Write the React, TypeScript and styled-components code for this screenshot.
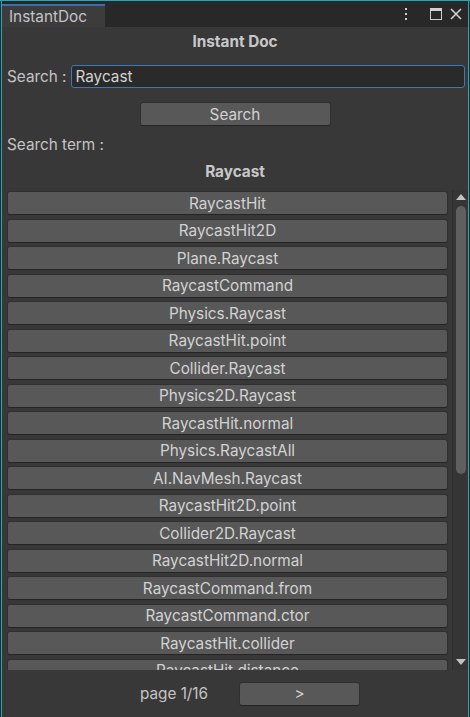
import React, { useState } from "react";
import styled, { createGlobalStyle } from "styled-components";

// ===================== GLOBAL =====================
const Global = createGlobalStyle`
  html, body {
    margin: 0;
    padding: 0;
    background: #282828;
  }
  * { box-sizing: border-box; }
`;

const RESULTS = [
  "RaycastHit",
  "RaycastHit2D",
  "Plane.Raycast",
  "RaycastCommand",
  "Physics.Raycast",
  "RaycastHit.point",
  "Collider.Raycast",
  "Physics2D.Raycast",
  "RaycastHit.normal",
  "Physics.RaycastAll",
  "AI.NavMesh.Raycast",
  "RaycastHit2D.point",
  "Collider2D.Raycast",
  "RaycastHit2D.normal",
  "RaycastCommand.from",
  "RaycastCommand.ctor",
  "RaycastHit.collider",
  "RaycastHit.distance",
];

const FONT_SIZE = 15.3;

// ===================== STYLED COMPONENTS =====================
const Window = styled.div`
  width: 470px;
  height: 717px;
  display: flex;
  flex-direction: column;
  background: #282828;
  border-top: 1px solid #1fa9b9;
  padding: 0 1px;
  font-family: Inter, "Noto Sans", sans-serif;
  color: #c4c4c4;
  font-size: ${FONT_SIZE}px;
`;

const Frame = styled.div`
  flex: 1;
  display: flex;
  flex-direction: column;
  border-left: 1px solid #1fa9b9;
  border-right: 1px solid #1fa9b9;
  min-height: 0;
`;

const TabBar = styled.div`
  height: 26px;
  display: flex;
  align-items: flex-end;
  justify-content: space-between;
  background: #282828;
`;

const Tab = styled.div`
  width: 103px;
  height: 23px;
  background: #3c3c3c;
  border-top: 2px solid #3a6fa8;
  padding: 0 0 0 7px;
  display: flex;
  align-items: center;
  color: #c4c4c4;
`;

const TabIcons = styled.div`
  display: flex;
  align-items: center;
  gap: 8px;
  height: 26px;
  padding-right: 6px;
  color: #d0d0d0;
`;

const Spacer = styled.span`
  width: 6px;
`;

const Body = styled.div`
  flex: 1;
  display: flex;
  flex-direction: column;
  background: #383838;
  min-height: 0;
`;

const Heading = styled.div<{ h?: number }>`
  text-align: center;
  font-weight: 700;
  color: #c8c8c8;
  height: ${(p) => p.h ?? 20}px;
  line-height: ${(p) => p.h ?? 20}px;
`;

const SearchRow = styled.div`
  display: flex;
  align-items: center;
  gap: 5px;
  padding: 0 3px 0 5px;
  margin-top: 8px;
`;

const Label = styled.span`
  color: #c4c4c4;
  white-space: nowrap;
`;

const TextField = styled.input`
  flex: 1;
  height: 23px;
  background: #2a2a2a;
  border: 1px solid #3a79bb;
  border-radius: 3px;
  color: #d2d2d2;
  font-family: inherit;
  font-size: ${FONT_SIZE}px;
  padding: 0 3px;
  outline: none;
`;

const ButtonRow = styled.div`
  display: flex;
  justify-content: center;
  margin-top: 14px;
`;

const UButton = styled.button<{ w?: number }>`
  width: ${(p) => (p.w ? `${p.w}px` : "100%")};
  height: 24px;
  background: #585858;
  border: 1px solid #303030;
  border-bottom-color: #242424;
  border-radius: 3px;
  color: #d2d2d2;
  font-family: inherit;
  font-size: ${FONT_SIZE}px;
  padding: 0;
  cursor: pointer;
  flex-shrink: 0;
`;

const TermLabel = styled.div`
  padding-left: 5px;
  margin-top: 8px;
  height: 22px;
  line-height: 22px;
`;

const ListArea = styled.div`
  flex: 1;
  display: flex;
  min-height: 0;
  margin-top: 2px;
`;

const List = styled.div`
  flex: 1;
  overflow: hidden;
  display: flex;
  flex-direction: column;
  gap: 3.5px;
  padding: 1px 4px 0 5px;
`;

const Scrollbar = styled.div`
  width: 16px;
  display: flex;
  flex-direction: column;
  align-items: center;
  border-left: 1px solid #2e2e2e;
  background: #353535;
  padding: 4px 0 5px;
`;

const Arrow = styled.div<{ down?: boolean }>`
  width: 0;
  height: 0;
  border-left: 5px solid transparent;
  border-right: 5px solid transparent;
  ${(p) =>
    p.down ? "border-top: 6px solid #c2c2c2;" : "border-bottom: 6px solid #c2c2c2;"}
`;

const Track = styled.div`
  flex: 1;
  width: 100%;
  display: flex;
  justify-content: center;
  padding-top: 6px;
`;

const Thumb = styled.div`
  width: 10px;
  height: 268px;
  border-radius: 5px;
  background: #5f5f5f;
`;

const Footer = styled.div`
  height: 47px;
  display: flex;
  align-items: center;
  justify-content: center;
  gap: 31px;
  padding-left: 30px;
  flex-shrink: 0;
`;

// ===================== ICONS =====================
const Kebab = () => (
  <svg width="4" height="12" viewBox="0 0 4 12">
    <rect x="1" y="0" width="2" height="2" fill="currentColor" />
    <rect x="1" y="5" width="2" height="2" fill="currentColor" />
    <rect x="1" y="10" width="2" height="2" fill="currentColor" />
  </svg>
);

const Maximize = () => (
  <svg width="12" height="12" viewBox="0 0 12 12">
    <rect x="0.5" y="0.5" width="11" height="11" fill="none" stroke="currentColor" />
    <rect x="0" y="0" width="12" height="3" fill="currentColor" />
  </svg>
);

const Close = () => (
  <svg width="12" height="12" viewBox="0 0 12 12">
    <path d="M1 1 L11 11 M11 1 L1 11" stroke="currentColor" strokeWidth="1.6" />
  </svg>
);

// ===================== COMPONENT =====================
const App: React.FC = () => {
  const [query, setQuery] = useState("Raycast");

  return (
    <>
      <Global />
      <Window>
        <Frame>
          <TabBar>
            <Tab>InstantDoc</Tab>
            <TabIcons>
              <Kebab />
              <Spacer />
              <Maximize />
              <Close />
            </TabIcons>
          </TabBar>
          <Body>
            <Heading h={30}>Instant Doc</Heading>
            <SearchRow>
              <Label>Search :</Label>
              <TextField value={query} onChange={(e) => setQuery(e.target.value)} />
            </SearchRow>
            <ButtonRow>
              <UButton w={191}>Search</UButton>
            </ButtonRow>
            <TermLabel>Search term :</TermLabel>
            <Heading h={32}>Raycast</Heading>
            <ListArea>
              <List>
                {RESULTS.map((r) => (
                  <UButton key={r}>{r}</UButton>
                ))}
              </List>
              <Scrollbar>
                <Arrow />
                <Track>
                  <Thumb />
                </Track>
                <Arrow down />
              </Scrollbar>
            </ListArea>
            <Footer>
              <Label>page 1/16</Label>
              <UButton w={121}>&gt;</UButton>
            </Footer>
          </Body>
        </Frame>
      </Window>
    </>
  );
};

export default App;
